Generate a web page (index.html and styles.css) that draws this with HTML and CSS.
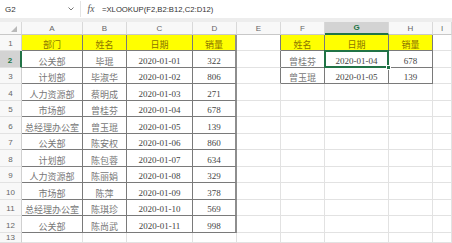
FILE: index.html
```html
<!DOCTYPE html>
<html lang="zh-CN">
<head>
<meta charset="utf-8">
<title>XLOOKUP</title>
<link rel="stylesheet" href="styles.css">
</head>
<body>
<div class="topbar">
  <div class="namebox"><span>G2</span><svg class="chev" width="6" height="4" viewBox="0 0 6 4"><polyline points="0.5,0.5 3,3 5.5,0.5" fill="none" stroke="#777" stroke-width="1"/></svg></div>
  <div class="fx">fx</div>
  <div class="formula">=XLOOKUP(F2,B2:B12,C2:D12)</div>
</div>
<div class="gap"></div>
<div class="sheet">
  <div class="row hdr">
    <div class="c ch corner"><span class="tri"></span></div>
    <div class="c ch">A</div><div class="c ch">B</div><div class="c ch">C</div><div class="c ch">D</div>
    <div class="c ch">E</div><div class="c ch">F</div><div class="c ch on">G</div><div class="c ch">H</div><div class="c ch">I</div>
  </div>
  <div class="row r1">
    <div class="c rh">1</div>
    <div class="c t y cn">部门</div><div class="c t y cn">姓名</div><div class="c t y cn">日期</div><div class="c t y dr cn">销量</div>
    <div class="c el"></div>
    <div class="c t y cn">姓名</div><div class="c t y cn">日期</div><div class="c t y cn">销量</div><div class="c"></div>
  </div>
  <div class="row">
    <div class="c rh on">2</div>
    <div class="c t cn">公关部</div><div class="c t cn">毕琨</div><div class="c t num">2020-01-01</div><div class="c t dr num">322</div>
    <div class="c el"></div>
    <div class="c t cn">曾桂芬</div><div class="c t num sel">2020-01-04<span class="handle"></span></div><div class="c t num">678</div><div class="c"></div>
  </div>
  <div class="row">
    <div class="c rh">3</div>
    <div class="c t cn">计划部</div><div class="c t cn">毕淑华</div><div class="c t num">2020-01-02</div><div class="c t dr num">806</div>
    <div class="c el"></div>
    <div class="c t cn">曾玉琨</div><div class="c t num">2020-01-05</div><div class="c t num">139</div><div class="c"></div>
  </div>
  <div class="row">
    <div class="c rh">4</div>
    <div class="c t cn">人力资源部</div><div class="c t cn">蔡明成</div><div class="c t num">2020-01-03</div><div class="c t dr num">271</div>
    <div class="c"></div><div class="c"></div><div class="c"></div><div class="c"></div><div class="c"></div>
  </div>
  <div class="row">
    <div class="c rh">5</div>
    <div class="c t cn">市场部</div><div class="c t cn">曾桂芬</div><div class="c t num">2020-01-04</div><div class="c t dr num">678</div>
    <div class="c"></div><div class="c"></div><div class="c"></div><div class="c"></div><div class="c"></div>
  </div>
  <div class="row">
    <div class="c rh">6</div>
    <div class="c t cn">总经理办公室</div><div class="c t cn">曾玉琨</div><div class="c t num">2020-01-05</div><div class="c t dr num">139</div>
    <div class="c"></div><div class="c"></div><div class="c"></div><div class="c"></div><div class="c"></div>
  </div>
  <div class="row">
    <div class="c rh">7</div>
    <div class="c t cn">公关部</div><div class="c t cn">陈安权</div><div class="c t num">2020-01-06</div><div class="c t dr num">860</div>
    <div class="c"></div><div class="c"></div><div class="c"></div><div class="c"></div><div class="c"></div>
  </div>
  <div class="row">
    <div class="c rh">8</div>
    <div class="c t cn">计划部</div><div class="c t cn">陈包蓉</div><div class="c t num">2020-01-07</div><div class="c t dr num">634</div>
    <div class="c"></div><div class="c"></div><div class="c"></div><div class="c"></div><div class="c"></div>
  </div>
  <div class="row">
    <div class="c rh">9</div>
    <div class="c t cn">人力资源部</div><div class="c t cn">陈丽娟</div><div class="c t num">2020-01-08</div><div class="c t dr num">329</div>
    <div class="c"></div><div class="c"></div><div class="c"></div><div class="c"></div><div class="c"></div>
  </div>
  <div class="row">
    <div class="c rh">10</div>
    <div class="c t cn">市场部</div><div class="c t cn">陈萍</div><div class="c t num">2020-01-09</div><div class="c t dr num">378</div>
    <div class="c"></div><div class="c"></div><div class="c"></div><div class="c"></div><div class="c"></div>
  </div>
  <div class="row">
    <div class="c rh">11</div>
    <div class="c t cn">总经理办公室</div><div class="c t cn">陈琪珍</div><div class="c t num">2020-01-10</div><div class="c t dr num">569</div>
    <div class="c"></div><div class="c"></div><div class="c"></div><div class="c"></div><div class="c"></div>
  </div>
  <div class="row">
    <div class="c rh">12</div>
    <div class="c t cn">公关部</div><div class="c t cn">陈尚武</div><div class="c t num">2020-01-11</div><div class="c t dr num">998</div>
    <div class="c"></div><div class="c"></div><div class="c"></div><div class="c"></div><div class="c"></div>
  </div>
  <div class="row last">
    <div class="c rh">13</div>
    <div class="c"></div><div class="c"></div><div class="c"></div><div class="c"></div>
    <div class="c"></div><div class="c"></div><div class="c"></div><div class="c"></div><div class="c"></div>
  </div>
</div>
</body>
</html>
```

FILE: styles.css
```css
* { box-sizing: border-box; margin: 0; padding: 0; }
html, body { width: 452px; height: 243px; overflow: hidden; background: #fff; }
body { font-family: "Liberation Sans", Arial, sans-serif; color: #444; }

.topbar { height: 18px; display: flex; align-items: center; background: #fff; }
.namebox { width: 81px; height: 16px; display: flex; align-items: center; justify-content: space-between; padding: 0 6px 0 5px; font-size: 8px; color: #333; border-right: 1px solid #e4e4e4; }
.chev { display: block; }
.fx { width: 20px; text-align: center; font-family: "Liberation Serif", serif; font-style: italic; font-size: 9.5px; color: #555; }
.formula { font-size: 7.7px; color: #333; padding-left: 1px; }
.gap { height: 4px; background: #ededed; }

.row { display: grid; grid-template-columns: 22px 61px 44px 66px 44px 44px 44px 64px 44px 19px; height: 16.5px; }
.row.hdr { height: 13px; }
.row.r1 { height: 16px; }
.row.last { height: 10.5px; }

.c { border-right: 1px solid #e2e2e2; border-bottom: 1px solid #e2e2e2; display: flex; align-items: flex-end; justify-content: center; font-size: 9px; line-height: 11px; white-space: nowrap; overflow: hidden; }

.ch { background: #f8f8f8; color: #666; font-size: 8px; align-items: center; border-right-color: #d9d9d9; border-bottom-color: #c8c8c8; }
.ch.on { background: #d3d3d3; color: #217346; font-weight: bold; border-bottom: 2px solid #217346; }
.corner { justify-content: flex-end; align-items: flex-end; padding: 0 4px 2px 0; }
.tri { width: 0; height: 0; border-left: 6px solid transparent; border-bottom: 6px solid #b9b9b9; }

.rh { background: #f8f8f8; color: #666; font-size: 8px; border-right-color: #d0d0d0; border-bottom-color: #e2e2e2; padding-bottom: 1px; }
.rh.on { background: #d3d3d3; color: #217346; font-weight: bold; border-right: 2px solid #217346; }
.last .rh { align-items: flex-start; line-height: 9px; padding: 0; }

.t { border-right-color: #7a7a7a; border-bottom-color: #7a7a7a; }
.dr { border-right: 2px solid #8e8e8e; }
.el { border-right-color: #7a7a7a; }
.y { background: #ffff00; color: #8a7400; }

.cn { font-family: "Noto Sans CJK SC", sans-serif; color: #777; font-size: 9px; }
.y.cn { color: #8a7400; }
.num { font-family: "Liberation Serif", serif; font-size: 9px; color: #444; }

.sel { position: relative; overflow: visible; }
.sel::after { content: ""; position: absolute; left: -1px; top: -1px; right: -1px; bottom: -1px; border: 2px solid #217346; z-index: 1; }
.handle { position: absolute; right: -3px; bottom: -3px; width: 5px; height: 5px; background: #217346; border: 1px solid #fff; z-index: 2; }
```
